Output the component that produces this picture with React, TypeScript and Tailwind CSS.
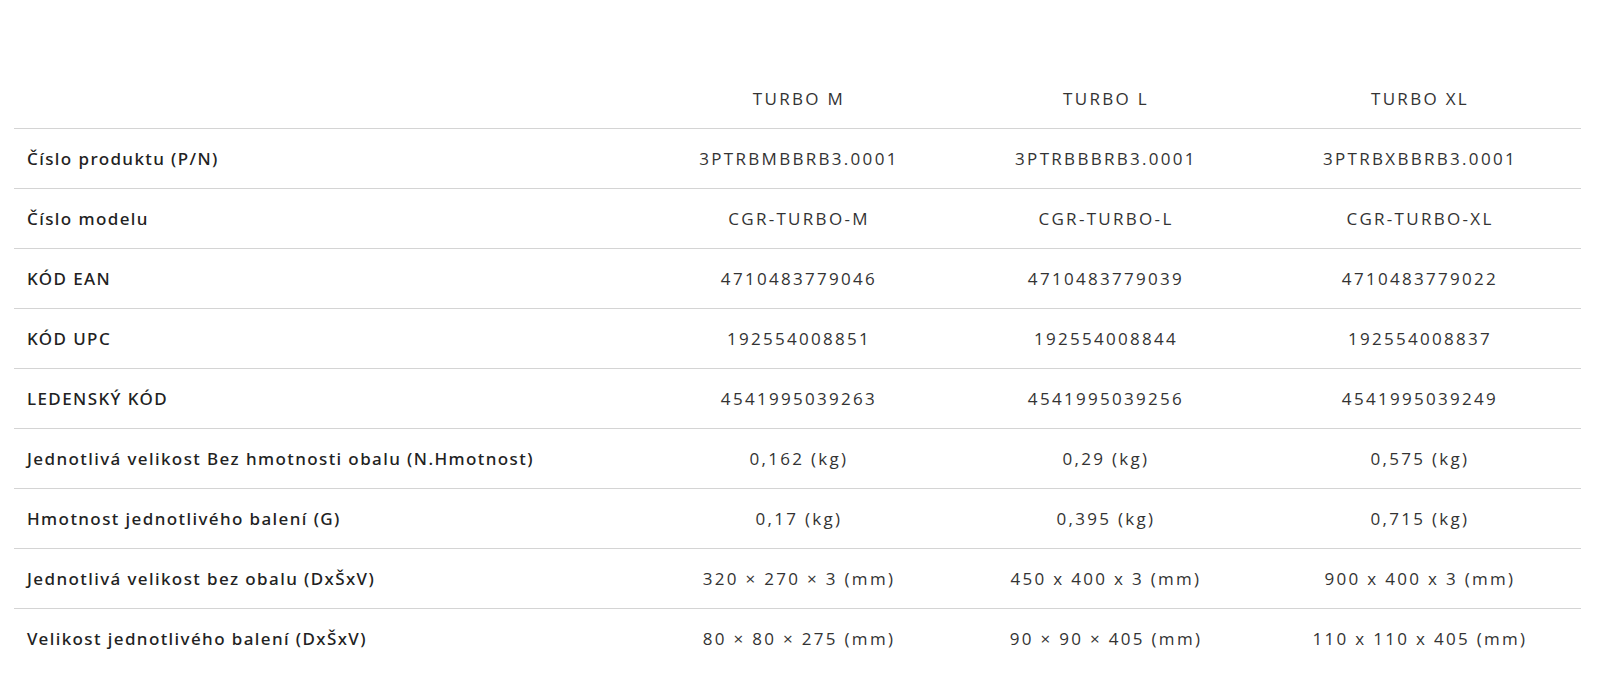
const models = ["TURBO M", "TURBO L", "TURBO XL"];

const rows: [string, string, string, string][] = [
  ["Číslo produktu (P/N)", "3PTRBMBBRB3.0001", "3PTRBBBRB3.0001", "3PTRBXBBRB3.0001"],
  ["Číslo modelu", "CGR-TURBO-M", "CGR-TURBO-L", "CGR-TURBO-XL"],
  ["KÓD EAN", "4710483779046", "4710483779039", "4710483779022"],
  ["KÓD UPC", "192554008851", "192554008844", "192554008837"],
  ["LEDENSKÝ KÓD", "4541995039263", "4541995039256", "4541995039249"],
  ["Jednotlivá velikost Bez hmotnosti obalu (N.Hmotnost)", "0,162 (kg)", "0,29 (kg)", "0,575 (kg)"],
  ["Hmotnost jednotlivého balení (G)", "0,17 (kg)", "0,395 (kg)", "0,715 (kg)"],
  ["Jednotlivá velikost bez obalu (DxŠxV)", "320 × 270 × 3 (mm)", "450 x 400 x 3 (mm)", "900 x 400 x 3 (mm)"],
  ["Velikost jednotlivého balení (DxŠxV)", "80 × 80 × 275 (mm)", "90 × 90 × 405 (mm)", "110 x 110 x 405 (mm)"],
];

const grid = "grid grid-cols-[631px_308px_306px_1fr] h-[60px] items-center";
const valueCls = "text-center text-[17px] tracking-[2.3px] text-[#333] font-['Open_Sans',sans-serif]";

export default function App() {
  return (
    <div className="min-h-screen bg-white pt-[69px] pl-[14px] pr-[16px]">
      <div className={`${grid} border-b border-[#d4d4d4]`}>
        <div />
        {models.map((m) => (
          <div key={m} className={valueCls}>
            {m}
          </div>
        ))}
      </div>
      {rows.map((r, i) => (
        <div key={r[0]} className={`${grid} ${i < rows.length - 1 ? "border-b border-[#d4d4d4]" : ""}`}>
          <div className="pl-[13px] text-[17px] font-medium tracking-[1.4px] text-[#222] font-['Noto_Sans',sans-serif]">
            {r[0]}
          </div>
          <div className={valueCls}>{r[1]}</div>
          <div className={valueCls}>{r[2]}</div>
          <div className={valueCls}>{r[3]}</div>
        </div>
      ))}
    </div>
  );
}
